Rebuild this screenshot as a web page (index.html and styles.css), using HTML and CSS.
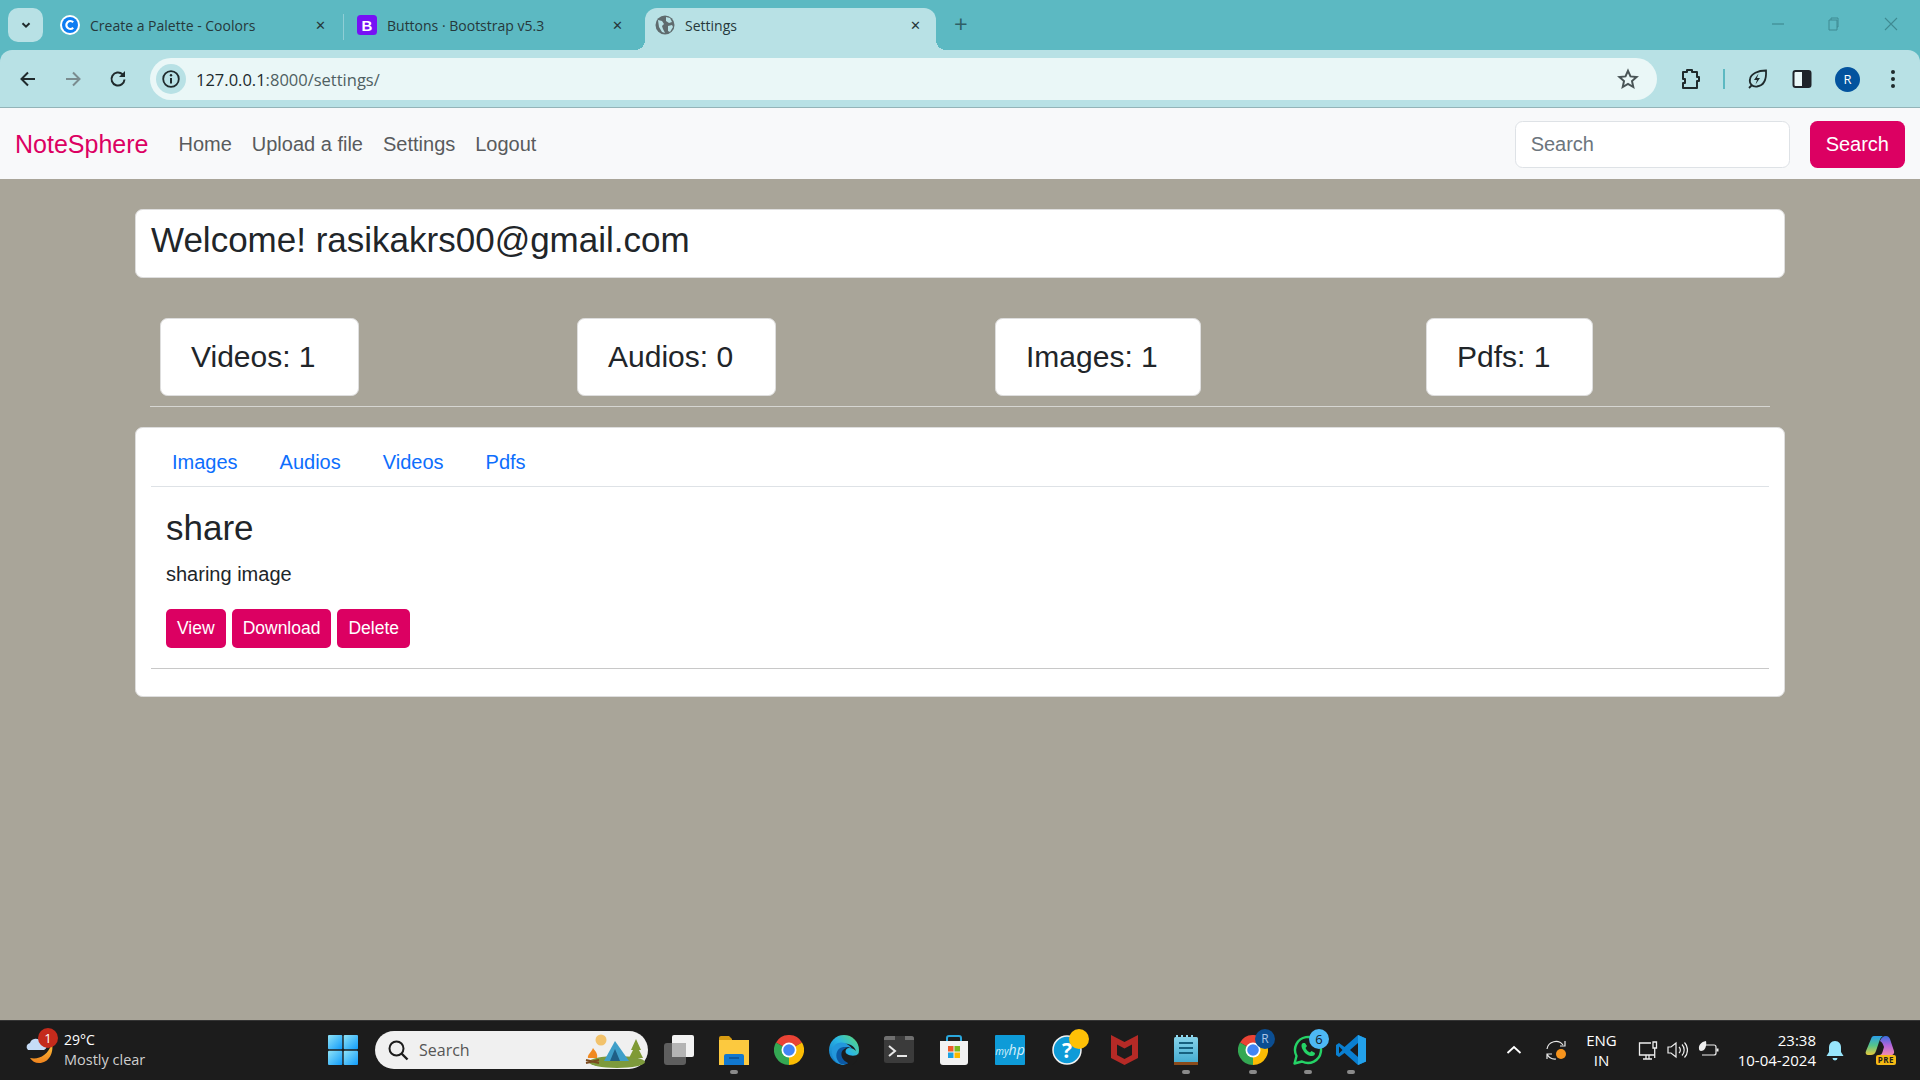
FILE: index.html
```html
<!DOCTYPE html>
<html lang="en">
<head>
<meta charset="UTF-8">
<title>Settings</title>
<link rel="stylesheet" href="styles.css">
</head>
<body>
<svg class="defs" width="0" height="0">
    <defs>
        <linearGradient id="winGrad" x1="0" y1="0" x2="1" y2="1"><stop offset="0" stop-color="#8fe3f7"/><stop offset="1" stop-color="#0f9bfa"/></linearGradient>
        <linearGradient id="edgeGrad" x1="0" y1="1" x2="1" y2="0"><stop offset="0" stop-color="#0f6fc0"/><stop offset=".55" stop-color="#2ab6e6"/><stop offset="1" stop-color="#62dd6a"/></linearGradient>
        <linearGradient id="noteGrad" x1="0" y1="0" x2="0" y2="1"><stop offset="0" stop-color="#86d3ea"/><stop offset="1" stop-color="#3fa9cf"/></linearGradient>
        <linearGradient id="moonGrad" x1="0" y1="0" x2="0" y2="1"><stop offset="0" stop-color="#fdc43c"/><stop offset="1" stop-color="#f0831e"/></linearGradient>
        <linearGradient id="copGrad" x1="0" y1="0" x2="0" y2="1"><stop offset="0" stop-color="#2a9fe8"/><stop offset=".5" stop-color="#55c48a"/><stop offset="1" stop-color="#e6c93c"/></linearGradient>
        <linearGradient id="copGrad2" x1="0" y1="0" x2="0" y2="1"><stop offset="0" stop-color="#3a6fe2"/><stop offset=".5" stop-color="#b465dc"/><stop offset="1" stop-color="#f08ab0"/></linearGradient>
        <symbol id="chromeLogo" viewBox="0 0 30 30">
            <path d="M15 15L2 7.5A15 15 0 0 1 28 7.5Z" fill="#ea4335"/>
            <path d="M15 15L2 7.5A15 15 0 0 0 15 30Z" fill="#34a853"/>
            <path d="M15 15L28 7.5A15 15 0 0 1 15 30Z" fill="#fbbc04"/>
            <circle cx="15" cy="15" r="7.5" fill="#fff"/>
            <circle cx="15" cy="15" r="5.8" fill="#4285f4"/>
        </symbol>
    </defs>
</svg>

<header class="browser">
    <div class="tabstrip">
        <button class="tab-search">
            <svg width="12" height="12" viewBox="0 0 12 12"><path d="M2.5 4.2L6 7.7l3.5-3.5" fill="none" stroke="#1f2a2c" stroke-width="2"/></svg>
        </button>
        <div class="tab">
            <svg class="favicon" width="20" height="20" viewBox="0 0 20 20"><circle cx="10" cy="10" r="10" fill="#fff"/><circle cx="10" cy="10" r="8" fill="#0d7df2"/><path d="M13.2 7.2A4 4 0 1 0 13.2 12.8" fill="none" stroke="#fff" stroke-width="2.2"/></svg>
            <span class="tab-title">Create a Palette - Coolors</span>
            <span class="tab-close">✕</span>
        </div>
        <span class="tab-sep"></span>
        <div class="tab">
            <svg class="favicon" width="20" height="20" viewBox="0 0 20 20"><rect width="20" height="20" rx="3.5" fill="#7611f5"/><text x="10" y="15.5" text-anchor="middle" class="fav-b">B</text></svg>
            <span class="tab-title">Buttons · Bootstrap v5.3</span>
            <span class="tab-close">✕</span>
        </div>
        <div class="tab tab-active">
            <svg class="favicon" width="20" height="20" viewBox="0 0 20 20"><circle cx="10" cy="10" r="9.5" fill="#5f6b6e"/><path d="M3 5l4 1 2 3-2 2 1 3 2 4-3-1-3-5zM11 2l4 1 2 4-3 1-3-2zM13 11l4-1 1 2-3 5-2-1z" fill="#b8e1e5"/></svg>
            <span class="tab-title">Settings</span>
            <span class="tab-close">✕</span>
        </div>
        <span class="new-tab">+</span>
        <div class="window-controls">
            <svg width="14" height="14" viewBox="0 0 14 14"><path d="M1 7h12" stroke="#3f8a92" stroke-width="1.2"/></svg>
            <svg width="14" height="14" viewBox="0 0 14 14"><path d="M3 3h8v10H3zM5 3V1h7v9h-1" fill="none" stroke="#3f8a92"/></svg>
            <svg width="14" height="14" viewBox="0 0 14 14"><path d="M1 1l12 12M13 1L1 13" stroke="#3f8a92" stroke-width="1.1"/></svg>
        </div>
    </div>
    <div class="toolbar">
        <svg class="tool-icon" width="20" height="20" viewBox="0 0 20 20"><path d="M17 10H4M10 3.5L3.5 10l6.5 6.5" fill="none" stroke="#1f2a2c" stroke-width="2"/></svg>
        <svg class="tool-icon" width="20" height="20" viewBox="0 0 20 20"><path d="M3 10h13M10 3.5l6.5 6.5-6.5 6.5" fill="none" stroke="#7a8c8f" stroke-width="2"/></svg>
        <svg class="tool-icon" width="20" height="20" viewBox="0 0 20 20"><path d="M16.5 10.5a6.5 6.5 0 1 1-2-5.200" fill="none" stroke="#1f2a2c" stroke-width="2"/><path d="M17 2v6h-6z" fill="#1f2a2c"/></svg>
        <div class="address">
            <span class="site-info">
                <svg width="20" height="20" viewBox="0 0 20 20"><circle cx="10" cy="10" r="7.8" fill="none" stroke="#1f2a2c" stroke-width="1.8"/><path d="M10 9v5.5" stroke="#1f2a2c" stroke-width="2"/><circle cx="10" cy="6.3" r="1.2" fill="#1f2a2c"/></svg>
            </span>
            <span class="url"><span class="url-host">127.0.0.1</span>:8000/settings/</span>
            <svg class="star" width="22" height="22" viewBox="0 0 22 22"><path d="M11 2.8l2.500 5.600 6.100.6-4.600 4.100 1.300 6-5.300-3.100-5.300 3.100 1.300-6L2.400 9l6.100-.6z" fill="none" stroke="#4a5557" stroke-width="2"/></svg>
        </div>
        <div class="toolbar-actions">
            <svg width="24" height="24" viewBox="0 0 24 24"><path d="M9 5V3h5v2h5v5h2v4h-2v7H5v-5h2v-4H5V5z" fill="none" stroke="#1f2a2c" stroke-width="2" stroke-linejoin="round"/></svg>
            <span class="toolbar-sep"></span>
            <svg class="leaf" width="22" height="22" viewBox="0 0 22 22"><path d="M20 2.500c.5 8-1.500 15-9 16-5 .5-8-3-7-7.500C5 5.500 12 2.500 20 2.500zM3 20l3-3" fill="none" stroke="#1f2a2c" stroke-width="1.8"/><path d="M12.500 5.500L8 12h3l-1.500 4.500L14 10h-3z" fill="#1f2a2c"/></svg>
            <svg class="panel" width="20" height="20" viewBox="0 0 20 20"><rect x="1.5" y="2" width="17" height="16" rx="2" fill="#eaf7f7" stroke="#1f2329" stroke-width="2"/><rect x="10" y="2" width="9" height="16" fill="#1f2329"/></svg>
            <span class="avatar">R</span>
            <svg class="dots" width="6" height="20" viewBox="0 0 6 20"><circle cx="3" cy="3" r="2" fill="#1f2a2c"/><circle cx="3" cy="10" r="2" fill="#1f2a2c"/><circle cx="3" cy="17" r="2" fill="#1f2a2c"/></svg>
        </div>
    </div>
</header>

<nav class="navbar">
    <a class="brand">NoteSphere</a>
    <ul class="nav-links">
        <li>Home</li>
        <li>Upload a file</li>
        <li>Settings</li>
        <li>Logout</li>
    </ul>
    <form class="nav-search">
        <input type="text" placeholder="Search">
        <button type="button" class="btn">Search</button>
    </form>
</nav>

<main class="page">
    <div class="panel-card welcome">
        <h3>Welcome! rasikakrs00@gmail.com</h3>
    </div>
    <div class="stats">
        <div class="panel-card stat"><h4>Videos: 1</h4></div>
        <div class="panel-card stat"><h4>Audios: 0</h4></div>
        <div class="panel-card stat"><h4>Images: 1</h4></div>
        <div class="panel-card stat"><h4>Pdfs: 1</h4></div>
    </div>
    <hr class="divider">
    <div class="panel-card files">
        <ul class="file-tabs">
            <li>Images</li>
            <li>Audios</li>
            <li>Videos</li>
            <li>Pdfs</li>
        </ul>
        <div class="file-item">
            <h3>share</h3>
            <p>sharing image</p>
            <div class="file-actions">
                <button class="btn btn-sm">View</button>
                <button class="btn btn-sm">Download</button>
                <button class="btn btn-sm">Delete</button>
            </div>
        </div>
        <hr class="file-rule">
    </div>
</main>

<footer class="taskbar">
    <div class="weather">
        <span class="weather-icon">
            <svg width="32" height="34" viewBox="0 0 32 34"><path d="M28 10c2 10-3 20-13 20-4 0-7-2-9-5 8 2 18-2 22-15z" fill="url(#moonGrad)"/><path d="M4 17a4 4 0 0 1 2-7 6 6 0 0 1 11-1 4 4 0 0 1 3 8z" fill="#c6dcf7"/></svg>
            <span class="badge badge-red">1</span>
        </span>
        <div class="weather-text">
            <span class="temp">29°C</span>
            <span class="cond">Mostly clear</span>
        </div>
    </div>
    <svg class="win-logo" width="30" height="30" viewBox="0 0 30 30"><rect width="14.3" height="14.3" rx="1" fill="url(#winGrad)"/><rect x="15.7" width="14.3" height="14.3" rx="1" fill="url(#winGrad)"/><rect y="15.7" width="14.3" height="14.3" rx="1" fill="url(#winGrad)"/><rect x="15.7" y="15.7" width="14.3" height="14.3" rx="1" fill="url(#winGrad)"/></svg>
    <div class="task-search">
        <svg width="22" height="22" viewBox="0 0 22 22"><circle cx="9.5" cy="9.5" r="7" fill="none" stroke="#1c1c1c" stroke-width="2"/><path d="M14.5 14.5l6 6" stroke="#1c1c1c" stroke-width="2.4"/></svg>
        <span>Search</span>
        <svg class="camp" width="62" height="38" viewBox="0 0 62 38">
            <circle cx="18" cy="9" r="5.5" fill="#f2c26b"/>
            <ellipse cx="34" cy="31" rx="28" ry="6" fill="#7d9a3c"/>
            <path d="M53 8l5 11h-2l4 8H46l4-8h-2z" fill="#7f9a35"/>
            <path d="M32 10l14 20H21z" fill="#3f9fc9"/>
            <path d="M32 18l5 12h-10z" fill="#1f5f86"/>
            <path d="M10 17c3 4 5 6 4 10H5c-1-3 3-5 5-10z" fill="#f18a21"/>
            <path d="M3 29l13 3M3 32l13-3" stroke="#7a4a1e" stroke-width="2"/>
        </svg>
    </div>
    <ul class="task-icons">
        <li>
            <svg width="30" height="30" viewBox="0 0 30 30"><rect y="8" width="22" height="22" rx="3" fill="#5e5e5e"/><rect x="8" width="22" height="22" rx="2" fill="#f2f2f2"/><rect x="8" y="8" width="14" height="14" fill="#b4b4b4"/></svg>
        </li>
        <li class="running">
            <svg width="30" height="30" viewBox="0 0 30 30"><path d="M0 3a2 2 0 0 1 2-2h8l3 3h0v3H0z" fill="#d89c12"/><path d="M0 5h30v25H0z" fill="#fcc93f"/><path d="M5 21a2 2 0 0 1 2-2h16a2 2 0 0 1 2 2v9H5z" fill="#1178d0"/><path d="M10 23h10" stroke="#0b4f92" stroke-width="1.5"/></svg>
        </li>
        <li>
            <svg width="30" height="30"><use href="#chromeLogo"/></svg>
        </li>
        <li>
            <svg width="30" height="30" viewBox="0 0 30 30"><circle cx="15" cy="15" r="15" fill="url(#edgeGrad)"/><path d="M30 18c-3 4-9 3-12 1-3-2-1-6 2-6 3 0 5 1 7 3-2-6-8-8-13-7-7 2-9 11-4 17 3 3 8 5 12 4 4-1 7-5 8-12z" fill="#1c1c1c"/><path d="M9 8c-5 2-8 8-5 14 2 5 7 8 12 8-5-2-8-8-6-13 1-3 4-5 7-5 4 0 6 2 7 3-3-5-9-9-15-7z" fill="#2398dc"/><path d="M12 29c-5-3-6-10-3-14 2-3 7-4 10-2-3 0-6 2-6.500 5-.5 3 1 7 5 9 3 1.500 1 3-5.500 2z" fill="#0c59a4"/></svg>
        </li>
        <li>
            <svg width="30" height="30" viewBox="0 0 30 30"><rect y="1" width="30" height="27" rx="2.5" fill="#3b3b3b"/><path d="M0 3.500a2.500 2.500 0 0 1 2.500-2.500H11v4H0z" fill="#707070"/><path d="M21 1h6.500a2.500 2.500 0 0 1 2.500 2.500V5h-9z" fill="#707070"/><path d="M5 11l6 5-6 5" fill="none" stroke="#e8e8e8" stroke-width="2"/><path d="M13 21h10" stroke="#e8e8e8" stroke-width="2"/></svg>
        </li>
        <li>
            <svg width="30" height="30" viewBox="0 0 30 30"><path d="M8 7V3a2 2 0 0 1 2-2h10a2 2 0 0 1 2 2v4" fill="none" stroke="#2aa7dc" stroke-width="2"/><path d="M1 6h28v21a3 3 0 0 1-3 3H4a3 3 0 0 1-3-3z" fill="#f2f2f2"/><rect x="9" y="11" width="5.5" height="5.5" fill="#ee5a2a"/><rect x="15.5" y="11" width="5.5" height="5.5" fill="#7ab81e"/><rect x="9" y="17.5" width="5.5" height="5.5" fill="#1ba1e2"/><rect x="15.5" y="17.5" width="5.5" height="5.5" fill="#fbb900"/></svg>
        </li>
        <li class="myhp-item">
            <span class="myhp">my<b>hp</b></span>
        </li>
        <li class="help">
            <svg width="30" height="30" viewBox="0 0 30 30"><circle cx="15" cy="15" r="14" fill="#0e9bd8" stroke="#f2f2f2" stroke-width="1.5"/><text x="15" y="23" text-anchor="middle" class="help-q">?</text></svg>
            <span class="badge badge-yellow"></span>
        </li>
        <li class="mcafee">
            <svg width="27" height="30" viewBox="0 0 27 30"><path d="M0 0l13.500 7L27 0v23l-13.500 7L0 23z" fill="#b52a26"/><path d="M6 9.500l7.500 4 7.500-4V20l-7.500 4L6 20z" fill="#1c1c1c"/></svg>
        </li>
        <li class="running notepad">
            <svg width="24" height="30" viewBox="0 0 24 30"><rect y="2" width="24" height="28" rx="1.5" fill="url(#noteGrad)"/><rect y="27" width="24" height="3" fill="#8a4b1c"/><path d="M3 2v-2M8 2v-2M13 2v-2M18 2v-2" stroke="#8fd6ec" stroke-width="2"/><path d="M5 8h14M5 13h14M5 18h14" stroke="#17607f" stroke-width="2"/></svg>
        </li>
        <li class="running chrome-profile">
            <svg width="30" height="30"><use href="#chromeLogo"/></svg>
            <span class="badge badge-blue">R</span>
        </li>
        <li class="running whatsapp">
            <svg width="30" height="30" viewBox="0 0 30 30"><path d="M1.500 28.500l2-7.500a13 13 0 1 1 5.500 5.500z" fill="none" stroke="#25d366" stroke-width="2.4" stroke-linejoin="round"/><path d="M10 8c-2 1-2 4 0 7 2 4 6 6 9 6 2 0 3-1 3-3l-3.500-2-1.500 1.500c-2-1-3.500-2.500-4.500-4.500L14 11l-2-3z" fill="#25d366"/></svg>
            <span class="badge badge-sky">6</span>
        </li>
        <li class="running vscode">
            <svg width="30" height="30" viewBox="0 0 30 30"><path d="M22 0l8 3.500v23L22 30 8.500 18 3 22l-3-2v-10l3-2 5.500 4z" fill="#0a7fd0"/><path d="M22 8l-8 7 8 7z" fill="#1c1c1c"/><path d="M22 0l8 3.500v23L22 30z" fill="#23a1ea"/><path d="M3 11.500l3.500 3.500L3 18.500z" fill="#1c1c1c"/></svg>
        </li>
    </ul>
    <div class="tray">
        <svg class="tray-chevron" width="16" height="10" viewBox="0 0 16 10"><path d="M1.500 8L8 2l6.500 6" fill="none" stroke="#fff" stroke-width="1.8"/></svg>
        <span class="tray-sync">
            <svg width="22" height="22" viewBox="0 0 22 22"><path d="M2 10a9 9 0 0 1 16-4M20 2v5h-5" fill="none" stroke="#e8e8e8" stroke-width="1.2"/><path d="M2 20v-5h5M2 15a9 9 0 0 0 9 5" fill="none" stroke="#e8e8e8" stroke-width="1.2"/><circle cx="16" cy="15" r="5" fill="#f7941d"/></svg>
        </span>
        <div class="tray-lang"><span>ENG</span><span>IN</span></div>
        <svg class="tray-net" width="20" height="21" viewBox="0 0 20 21"><path d="M13 3H1.500v12H16M5 19h9M8 15v4M11 15v4" fill="none" stroke="#eee" stroke-width="1.3"/><path d="M15 2h3.500v6H15zM16.700 8v10" fill="none" stroke="#eee" stroke-width="1.3"/></svg>
        <svg class="tray-vol" width="21" height="20" viewBox="0 0 21 20"><path d="M1 7h3l5-4v14l-5-4H1z" fill="none" stroke="#eee" stroke-width="1.2"/><path d="M12 7a4 4 0 0 1 0 6M15 4.500a8 8 0 0 1 0 11M17.500 2.500a11 11 0 0 1 0 15" fill="none" stroke="#eee" stroke-width="1.2"/></svg>
        <svg class="tray-batt" width="21" height="20" viewBox="0 0 21 20"><path d="M6 5h10a2 2 0 0 1 2 2v6a2 2 0 0 1-2 2H4" fill="none" stroke="#eee" stroke-width="1.2"/><path d="M18.500 8.500h2v3h-2z" fill="#eee"/><path d="M8 1C3 2 .5 5 1 9c0 1 1 2 2 2 4 0 6-5 5-10z" fill="#eee"/></svg>
        <div class="clock"><span>23:38</span><span>10-04-2024</span></div>
        <svg class="tray-bell" width="18" height="21" viewBox="0 0 18 21"><path d="M9 1c-4 0-6 3-6 6.500V12l-2.500 4h17L15 12V7.500C15 4 13 1 9 1z" fill="#97e5fb"/><path d="M6.500 18h5a2.500 2.500 0 0 1-5 0z" fill="#97e5fb"/></svg>
        <span class="copilot">
            <svg width="30" height="24" viewBox="0 0 30 24"><path d="M9 1h9c-2 1-3 3-4 6l-3 9c-1 3-3 4-5 4H3c-2 0-3-2-2-4L6 4c.5-2 1.500-3 3-3z" fill="url(#copGrad)"/><path d="M15 6c1-3 3-5 6-5 2 0 3 1 4 3l4 12c.5 2-.5 4-2.500 4H14c2 0 3-1 3.500-3l1.500-5c-1-3-2-5-4-6z" fill="url(#copGrad2)"/></svg>
            <span class="pre">PRE</span>
        </span>
    </div>
</footer>
</body>
</html>
```

FILE: styles.css
```css
* {
    box-sizing: border-box;
}
html, body {
    height: 100%;
}
body {
    margin: 0;
    display: flex;
    flex-direction: column;
    background-color: #a9a599;
    font-family: "Liberation Sans", Arial, sans-serif;
    color: #212529;
    overflow: hidden;
}
.defs {
    position: absolute;
}
ul {
    list-style: none;
    margin: 0;
    padding: 0;
}

/* browser chrome */
.browser {
    background-color: #5cb9c2;
    font-family: "Open Sans", "Noto Sans", sans-serif;
}
.tabstrip {
    height: 50px;
    display: flex;
    align-items: flex-end;
    padding-left: 8px;
}
.tab-search {
    width: 35px;
    height: 34px;
    margin-bottom: 8px;
    margin-right: 7px;
    border: none;
    border-radius: 10px;
    background-color: #b8e1e5;
    display: flex;
    align-items: center;
    justify-content: center;
    padding: 0;
}
.tab {
    width: 294px;
    height: 42px;
    display: flex;
    align-items: center;
    padding: 0 0 8px 10px;
    color: #26383b;
    font-size: 14px;
}
.tab-title {
    margin-left: 10px;
    flex: 1;
    white-space: nowrap;
}
.tab-close {
    width: 16px;
    margin-right: 16px;
    font-size: 13px;
    text-align: center;
}
.fav-b {
    fill: #fff;
    font-size: 15px;
    font-weight: 700;
    font-family: "Liberation Sans", sans-serif;
}
.tab-sep {
    width: 1px;
    height: 26px;
    background-color: #8fced5;
    margin-bottom: 10px;
    margin-left: -1px;
    margin-right: 3px;
}
.tab-active {
    position: relative;
    width: 291px;
    margin-left: 4px;
    padding: 0 0 8px 10px;
    background-color: #b8e1e5;
    border-radius: 12px 12px 0 0;
}
.tab-active .tab-close {
    margin-right: 13px;
}
.tab-active::before,
.tab-active::after {
    content: "";
    position: absolute;
    bottom: 0;
    width: 10px;
    height: 10px;
}
.tab-active::before {
    left: -10px;
    background: radial-gradient(circle at 0 0, transparent 10px, #b8e1e5 10px);
}
.tab-active::after {
    right: -10px;
    background: radial-gradient(circle at 100% 0, transparent 10px, #b8e1e5 10px);
}
.new-tab {
    margin: 0 0 8px 18px;
    height: 34px;
    line-height: 32px;
    font-size: 24px;
    color: #2f5f66;
}
.window-controls {
    margin-left: auto;
    height: 50px;
    display: flex;
    align-items: center;
    gap: 41px;
    padding: 0 22px 2px 0;
}
.window-controls svg:last-child {
    margin-left: 3px;
}
.toolbar {
    height: 58px;
    background-color: #b8e1e5;
    border-radius: 12px 12px 0 0;
    border-bottom: 1px solid #93b4b8;
    display: flex;
    align-items: center;
    padding: 1px 16px 0 18px;
}
.tool-icon {
    margin-right: 25px;
}
.tool-icon:nth-child(3) {
    margin-right: 22px;
}
.address {
    width: 1507px;
    height: 42px;
    border-radius: 21px;
    background-color: #eaf7f7;
    display: flex;
    align-items: center;
    padding: 0 18px 0 6px;
}
.site-info {
    width: 30px;
    height: 30px;
    border-radius: 50%;
    background-color: #b8e1e5;
    display: flex;
    align-items: center;
    justify-content: center;
}
.url {
    margin-left: 10px;
    font-size: 16.5px;
    color: #4f5f62;
}
.url-host {
    color: #1c2a2d;
}
.star {
    margin-left: auto;
}
.toolbar-actions {
    flex: 1;
    display: flex;
    align-items: center;
    padding-left: 21px;
}
.toolbar-sep {
    width: 2px;
    height: 20px;
    background-color: #5cb9c2;
    margin: 0 21px 0 21px;
}
.leaf {
    margin-right: 24px;
}
.panel {
    margin-right: 23px;
}
.avatar {
    width: 25px;
    height: 25px;
    border-radius: 50%;
    background-color: #03539e;
    color: #fff;
    font-size: 13px;
    text-align: center;
    line-height: 25px;
    margin-right: 30px;
}

/* site navbar */
.navbar {
    height: 71px;
    background-color: #f8f9fa;
    display: flex;
    align-items: center;
    padding: 1px 15px 0;
}
.brand {
    font-size: 25px;
    color: #dc0062;
    margin-right: 20px;
}
.nav-links {
    display: flex;
    font-size: 20px;
    color: #595b5d;
}
.nav-links li {
    padding: 0 10px;
}
.nav-search {
    margin-left: auto;
    display: flex;
    gap: 20px;
}
.nav-search input {
    width: 275px;
    height: 47px;
    padding: 0 15px;
    border: 1px solid #dee2e6;
    border-radius: 7.5px;
    font-size: 20px;
    font-family: inherit;
    color: #212529;
}
.nav-search input::placeholder {
    color: #6c757d;
}
.btn {
    height: 47px;
    padding: 0 16px;
    border: none;
    border-radius: 7.5px;
    background-color: #dc0062;
    color: #fff;
    font-family: inherit;
    font-size: 20px;
}
.btn-sm {
    height: 39px;
    padding: 0 11px;
    border-radius: 5px;
    font-size: 17.5px;
}

/* page content */
.page {
    flex: 1;
    padding: 30px 135px 0;
}
.panel-card {
    background-color: #fff;
    border: 1px solid #dedede;
    border-radius: 7.5px;
}
h3, h4 {
    margin: 0;
    font-weight: 400;
    line-height: 1.2;
}
h3 {
    font-size: 35px;
}
h4 {
    font-size: 30px;
}
.welcome {
    height: 69px;
    padding: 9px 15px 0;
}
.stats {
    display: grid;
    grid-template-columns: 417px 418px 431px auto;
    justify-items: start;
    margin-top: 40px;
    padding-left: 25px;
}
.stat {
    padding: 20px 42px 20px 30px;
}
.divider {
    margin: 10px 15px 20px;
    border: none;
    border-top: 1px solid #d6d6d2;
}
.files {
    height: 270px;
    padding: 9px 15px 0;
}
.file-tabs {
    display: flex;
    height: 50px;
    border-bottom: 1px solid #dee2e6;
    font-size: 20px;
    color: #0d6efd;
}
.file-tabs li {
    padding: 10px 21px;
    line-height: 30px;
}
.file-item {
    padding: 20px 15px 0;
}
.file-item p {
    margin: 10px 0 20px;
    font-size: 20px;
    line-height: 30px;
}
.file-actions {
    display: flex;
    gap: 6px;
}
.file-rule {
    margin: 20px 0 0;
    border: none;
    border-top: 1px solid #c8c8c8;
}

/* windows taskbar */
.taskbar {
    height: 60px;
    background-color: #1c1c1c;
    border-top: 1px solid #343434;
    padding-bottom: 1px;
    display: flex;
    align-items: center;
    font-family: "Open Sans", "Noto Sans", sans-serif;
    color: #fff;
}
.weather {
    width: 328px;
    display: flex;
    align-items: center;
    padding-left: 24px;
}
.weather-icon {
    position: relative;
    width: 40px;
    height: 34px;
}
.weather-text {
    display: flex;
    flex-direction: column;
    font-size: 14px;
    line-height: 20px;
}
.cond {
    color: #cfcfcf;
    font-size: 14.5px;
}
.badge {
    position: absolute;
    border-radius: 50%;
    text-align: center;
    color: #fff;
    font-size: 13px;
}
.badge-red {
    top: -5px;
    left: 14px;
    width: 20px;
    height: 20px;
    line-height: 20px;
    background-color: #c42b1c;
}
.win-logo {
    margin-right: 17px;
}
.task-search {
    width: 273px;
    height: 38px;
    border-radius: 19px;
    background-color: #f0f0f0;
    color: #555;
    font-size: 16px;
    display: flex;
    align-items: center;
    padding: 0 3px 0 12px;
}
.task-search span {
    margin-left: 10px;
}
.camp {
    margin-left: auto;
}
.task-icons {
    display: flex;
    align-items: center;
    gap: 25px;
    margin-left: 16px;
}
.task-icons li {
    position: relative;
    height: 30px;
    display: flex;
}
.running::after {
    content: "";
    position: absolute;
    left: 50%;
    bottom: -9px;
    width: 8px;
    height: 4px;
    margin-left: -4px;
    border-radius: 2px;
    background-color: #8a8a8a;
}
.myhp-item {
    margin-left: 1px;
}
.myhp {
    width: 30px;
    height: 30px;
    background-color: #0e9bd8;
    color: #d8f1fb;
    font-size: 10px;
    font-style: italic;
    line-height: 30px;
    text-align: center;
    white-space: nowrap;
    border-radius: 1px;
}
.myhp b {
    font-size: 14px;
    font-weight: 400;
}
.help {
    margin-left: 2px;
}
.help-q {
    font-size: 21px;
    font-weight: 700;
    fill: #fff;
    font-family: "Open Sans", sans-serif;
}
.badge-yellow {
    top: -6px;
    right: -7px;
    width: 20px;
    height: 20px;
    background-color: #ffc107;
}
.mcafee {
    margin-left: 4px;
}
.notepad {
    margin-left: 11px;
}
.chrome-profile {
    margin-left: 15px;
}
.badge-blue {
    top: -6px;
    right: -7px;
    width: 20px;
    height: 20px;
    line-height: 20px;
    background-color: #0b4e92;
    color: #a9c4e6;
    font-size: 12px;
}
.badge-sky {
    top: -6px;
    right: -6px;
    width: 20px;
    height: 20px;
    line-height: 20px;
    background-color: #4db8f5;
    color: #14202b;
}
.vscode {
    margin-left: -12px;
}
.tray {
    margin-left: auto;
    display: flex;
    align-items: center;
    padding-right: 25px;
}
.tray-chevron {
    margin-right: 23px;
}
.tray-sync {
    display: flex;
    margin-right: 19px;
}
.tray-lang {
    display: flex;
    flex-direction: column;
    align-items: center;
    font-size: 15px;
    line-height: 20px;
    margin-right: 21px;
}
.tray-net {
    margin-right: 9px;
}
.tray-vol {
    margin-right: 10px;
}
.tray-batt {
    margin-right: 19px;
}
.clock {
    display: flex;
    flex-direction: column;
    align-items: flex-end;
    font-size: 15px;
    line-height: 20px;
    margin-right: 10px;
}
.tray-bell {
    margin-right: 21px;
}
.copilot {
    position: relative;
    width: 30px;
    height: 30px;
}
.pre {
    position: absolute;
    right: -1px;
    bottom: 0;
    padding: 0 2px;
    border-radius: 2px;
    background-color: #f5b915;
    color: #1c1c1c;
    font-size: 8px;
    font-weight: 700;
    line-height: 10px;
    letter-spacing: .5px;
}
```
